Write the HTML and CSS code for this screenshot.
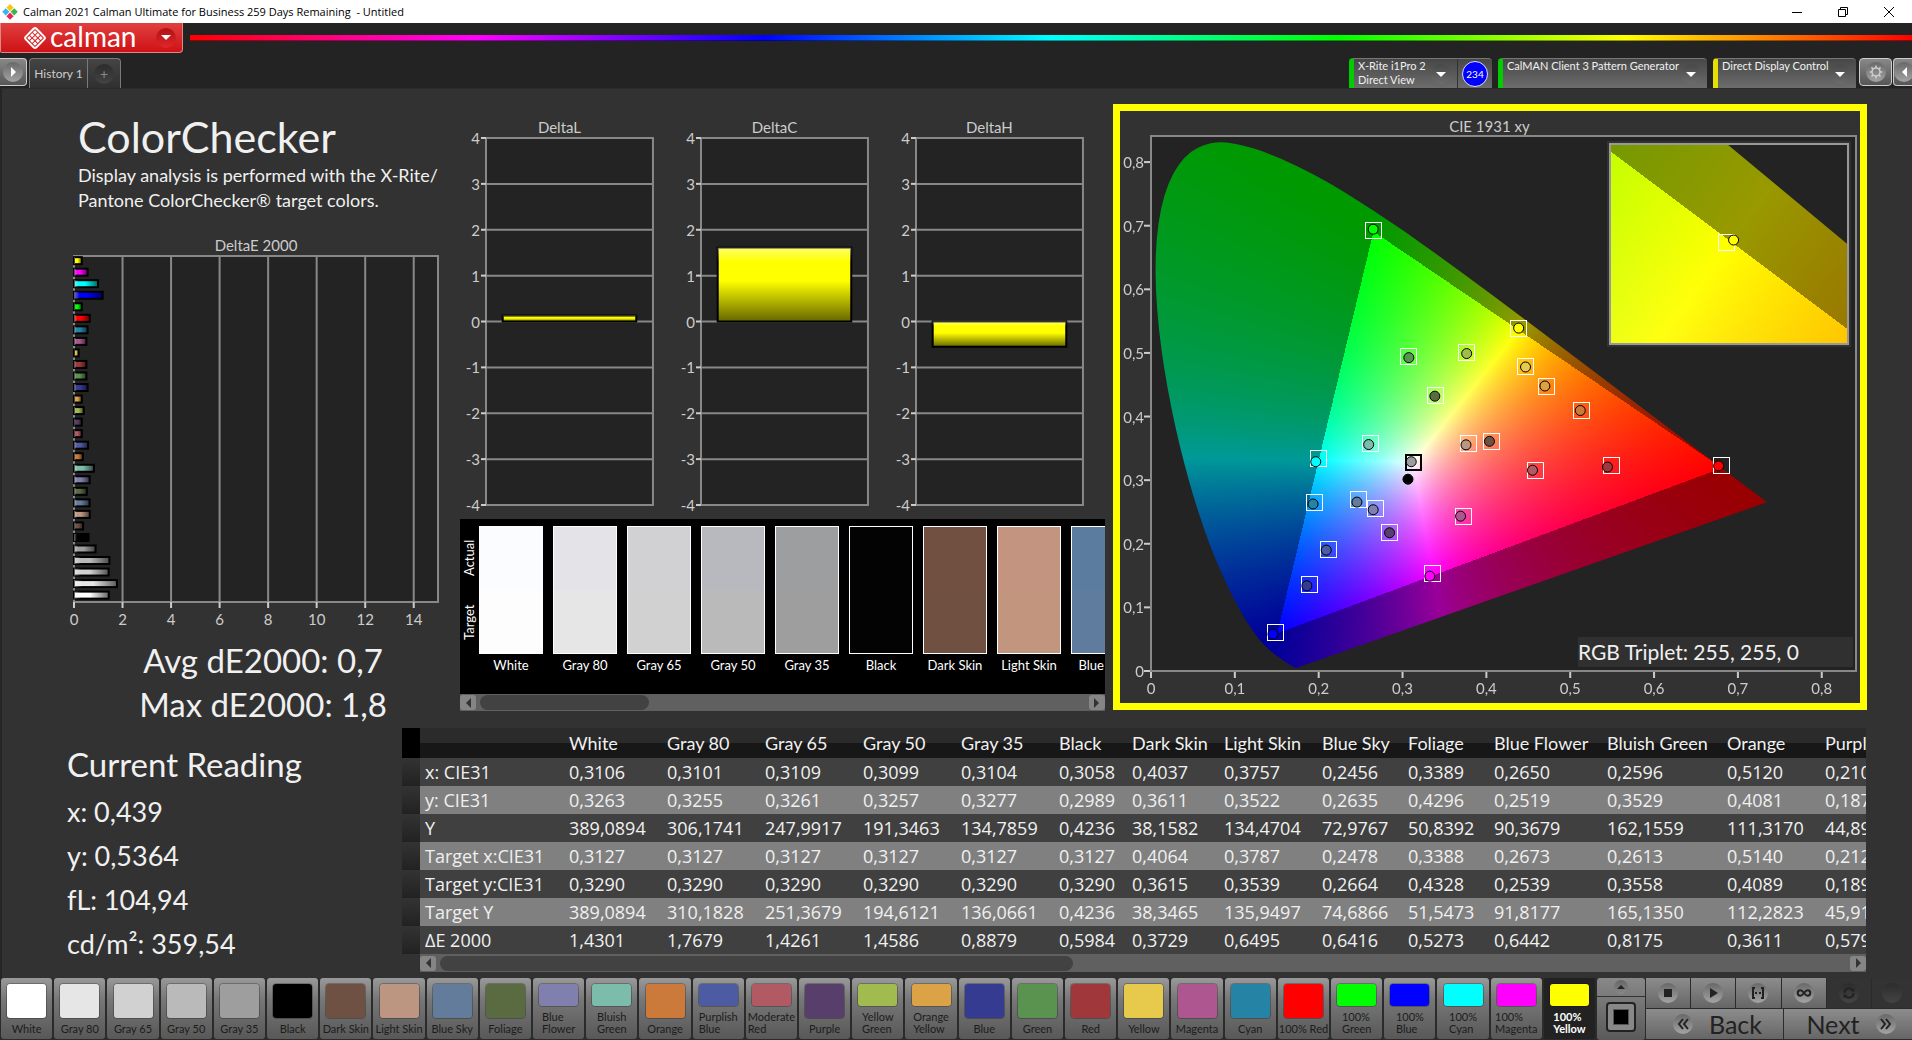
FILE: index.html
```html
<!doctype html>
<html lang="en">
  <head>
    <meta charset="UTF-8" />
    <meta name="viewport" content="width=device-width, initial-scale=1" />
    <title>Calman 2021</title>
    <link rel="stylesheet" href="styles.css">
  </head>
  <body>
    <header class="titlebar">
      <svg class="titlebar__icon" viewBox="0 0 16 16" aria-hidden="true">
        <path d="M8 0l3.600 3.600L8 7.200 4.400 3.600z" fill="#f7c514" />
        <path d="M3.800 4.200l3.600 3.600-3.600 3.600L.2 7.800z" fill="#35b6ee" />
        <path d="M12.200 4.200l3.600 3.600-3.600 3.600-3.600-3.600z" fill="#3fb649" />
        <path d="M8 8.600l3.600 3.600L8 15.800l-3.600-3.600z" fill="#e8245c" />
      </svg>
      <span class="titlebar__text">Calman 2021 Calman Ultimate for Business 259 Days Remaining &nbsp;- Untitled</span>
      <div class="titlebar__controls">
        <button aria-label="Minimize"><svg viewBox="0 0 12 12"><path d="M1 6.500h10" /></svg></button>
        <button aria-label="Restore"><svg viewBox="0 0 12 12"><path d="M1.500 3.500h7v7h-7zM3.500 3.500v-2h7v7h-2" /></svg></button>
        <button aria-label="Close"><svg viewBox="0 0 12 12"><path d="M1 1l10 10M11 1L1 11" /></svg></button>
      </div>
    </header>

    <div class="brandbar">
      <button class="brand">
        <svg class="brand__mark" viewBox="0 0 24 24" aria-hidden="true">
          <g transform="rotate(45 12 12)">
            <rect x="4.500" y="4.500" width="15" height="15" rx="2" fill="none" stroke="#fff" stroke-width="2" />
            <g fill="#fff">
              <rect x="6.500" y="6.500" width="3" height="3" />
              <rect x="10.500" y="6.500" width="3" height="3" />
              <rect x="14.500" y="6.500" width="3" height="3" />
              <rect x="6.500" y="10.500" width="3" height="3" />
              <rect x="10.500" y="10.500" width="3" height="3" />
              <rect x="14.500" y="10.500" width="3" height="3" />
              <rect x="6.500" y="14.500" width="3" height="3" />
              <rect x="10.500" y="14.500" width="3" height="3" />
              <rect x="14.500" y="14.500" width="3" height="3" />
            </g>
          </g>
        </svg>
        <span class="brand__name">calman</span>
        <span class="knob knob--red"><span class="caret"></span></span>
      </button>
      <div class="rainbow"></div>
    </div>

    <nav class="tabbar">
      <button class="square-button square-button--left" aria-label="Show panel">
        <span class="knob knob--light"><span class="caret caret--right"></span></span>
      </button>
      <div class="tabs">
        <button class="tabs__item">History 1</button>
        <button class="tabs__add" aria-label="Add tab"><span class="knob knob--dark">+</span></button>
      </div>
      <div class="devices">
        <div class="device device--meter">
          <button class="device__main">
            <span>X-Rite i1Pro 2<br>Direct View</span>
            <span class="knob"><span class="caret"></span></span>
          </button>
          <button class="device__count"><span>234</span></button>
        </div>
        <div class="device device--source">
          <button class="device__main">
            <span>CalMAN Client 3 Pattern Generator</span>
            <span class="knob"><span class="caret"></span></span>
          </button>
        </div>
        <div class="device device--display">
          <button class="device__main">
            <span>Direct Display Control</span>
            <span class="knob"><span class="caret"></span></span>
          </button>
        </div>
        <button class="square-button" aria-label="Settings">
          <span class="knob knob--light">
            <svg class="gear" viewBox="0 0 20 20">
              <circle cx="10" cy="10" r="5" />
              <path d="M10 2v3M10 15v3M2 10h3M15 10h3M4.300 4.300l2.200 2.200M13.500 13.500l2.200 2.200M15.700 4.300l-2.200 2.200M6.500 13.500l-2.200 2.200" />
            </svg>
          </span>
        </button>
        <button class="square-button square-button--right" aria-label="Hide panel">
          <span class="knob knob--light"><span class="caret caret--left"></span></span>
        </button>
      </div>
    </nav>

    <main>
      <div class="charts">
        <section class="summary">
          <h1>ColorChecker</h1>
          <p class="summary__text">Display analysis is performed with the X-Rite/<br>Pantone ColorChecker® target colors.</p>
          <h2 class="chart-title">DeltaE 2000</h2>
          <svg class="plot plot--delta-e" id="delta-e"></svg>
          <div class="summary__totals">
            <p>Avg dE2000: 0,7</p>
            <p>Max dE2000: 1,8</p>
          </div>
        </section>

        <section class="middle">
          <div class="deltas">
            <div class="delta">
              <h2 class="chart-title">DeltaL</h2>
              <svg class="plot plot--delta" data-value="0.13"></svg>
            </div>
            <div class="delta">
              <h2 class="chart-title">DeltaC</h2>
              <svg class="plot plot--delta" data-value="1.61"></svg>
            </div>
            <div class="delta">
              <h2 class="chart-title">DeltaH</h2>
              <svg class="plot plot--delta" data-value="-0.55"></svg>
            </div>
          </div>
          <div class="compare">
            <div class="compare__axis"><span>Target</span><span>Actual</span></div>
            <div class="compare__list" id="compare"></div>
          </div>
          <div class="scrollbar">
            <button class="scrollbar__arrow" aria-label="Scroll left"><span class="caret caret--left"></span></button>
            <div class="scrollbar__track"><div class="scrollbar__thumb scrollbar__thumb--swatches"></div></div>
            <button class="scrollbar__arrow" aria-label="Scroll right"><span class="caret caret--right"></span></button>
          </div>
        </section>

        <section class="cie">
          <h2 class="chart-title">CIE 1931 xy</h2>
          <div class="cie__plot">
            <canvas class="cie__fill" id="cie-fill"></canvas>
            <svg class="plot cie__marks" id="cie-marks"></svg>
            <div class="cie__inset">
              <canvas class="cie__fill" id="inset-fill"></canvas>
              <svg class="plot cie__marks" id="inset-marks"></svg>
            </div>
            <p class="cie__triplet">RGB Triplet: 255, 255, 0</p>
          </div>
        </section>
      </div>

      <div class="readings">
        <section class="current">
          <h2>Current Reading</h2>
          <p>x: 0,439</p>
          <p>y: 0,5364</p>
          <p>fL: 104,94</p>
          <p>cd/m²: 359,54</p>
        </section>
        <section class="data">
          <div class="data__view">
            <table>
              <colgroup>
                <col class="col-mark"><col class="col-label">
                <col class="col-m"><col class="col-m"><col class="col-m"><col class="col-m"><col class="col-m">
                <col class="col-xs"><col class="col-s2"><col class="col-m"><col class="col-s"><col class="col-s">
                <col class="col-l"><col class="col-xl"><col class="col-m"><col class="col-xl">
              </colgroup>
              <thead><tr id="data-head"></tr></thead>
              <tbody id="data-body"></tbody>
            </table>
          </div>
          <div class="scrollbar scrollbar--data">
            <button class="scrollbar__arrow" aria-label="Scroll left"><span class="caret caret--left"></span></button>
            <div class="scrollbar__track"><div class="scrollbar__thumb scrollbar__thumb--data"></div></div>
            <button class="scrollbar__arrow" aria-label="Scroll right"><span class="caret caret--right"></span></button>
          </div>
        </section>
      </div>
    </main>

    <footer>
      <div class="palette" id="palette"></div>
      <div class="pattern">
        <button class="pattern__up" aria-label="More patterns"><span class="knob knob--small"><span class="caret caret--up"></span></span></button>
        <button class="pattern__window" aria-label="Window pattern"><span></span></button>
      </div>
      <div class="transport">
        <div class="transport__row">
          <button aria-label="Stop"><span class="knob knob--light"><svg viewBox="0 0 16 16"><path d="M4 4h8v8H4z" /></svg></span></button>
          <button aria-label="Play"><span class="knob knob--light"><svg viewBox="0 0 16 16"><path d="M5 3l8 5-8 5z" /></svg></span></button>
          <button aria-label="Read series"><span class="knob knob--light"><svg viewBox="0 0 16 16"><path class="line" d="M5 3H3v10h2M11 3h2v10h-2M5 8h2M9 8h2" /></svg></span></button>
          <button aria-label="Read continuous"><span class="knob knob--light"><svg viewBox="0 0 16 16"><path class="line" d="M8 8C6.500 6 5.600 5.300 4.400 5.300a2.700 2.700 0 0 0 0 5.400C5.600 10.700 6.500 10 8 8s2.400-2.700 3.600-2.700a2.700 2.700 0 0 1 0 5.400C10.400 10.700 9.500 10 8 8z" /></svg></span></button>
          <button class="is-off" aria-label="Refresh"><span class="knob knob--dark"><svg viewBox="0 0 16 16"><path class="line" d="M3.500 8a4.500 4.500 0 0 1 8-3M12.500 8a4.500 4.500 0 0 1-8 3" /><path d="M9.500 6.500h4v-4zM6.500 9.500h-4v4z" /></svg></span></button>
          <button class="is-off" aria-label="Record"><span class="knob knob--dark"></span></button>
        </div>
        <div class="transport__row transport__row--nav">
          <button><span class="knob knob--light"><svg viewBox="0 0 16 16"><path class="line" d="M8 3L4 8l4 5M13 3L9 8l4 5" /></svg></span>Back</button>
          <button>Next<span class="knob knob--light"><svg viewBox="0 0 16 16"><path class="line" d="M3 3l4 5-4 5M8 3l4 5-4 5" /></svg></span></button>
        </div>
      </div>
    </footer>
    <script src="main.js"></script>
  </body>
</html>
```
FILE: styles.css
```css
* {
  box-sizing: border-box;
}

body {
  margin: 0;
  min-height: 100vh;
  display: flex;
  flex-direction: column;
  overflow-x: hidden;
  background-color: #232323;
  color: #f0f0f0;
  font-family: Lato, "Liberation Sans", sans-serif;
}

h1,
h2,
p {
  margin: 0;
  font-weight: 400;
}

button {
  padding: 0;
  border: 0;
  background: none;
  color: inherit;
  font-family: inherit;
}

/* window title */

.titlebar {
  display: flex;
  align-items: center;
  height: 23px;
  padding-left: 2px;
  background-color: #fff;
  color: #000;
  font: 11px "Open Sans", sans-serif;
}

.titlebar__icon {
  width: 16px;
  height: 16px;
  margin-right: 5px;
}

.titlebar__controls {
  display: flex;
  margin-left: auto;
}

.titlebar__controls button {
  display: grid;
  place-items: center;
  width: 46px;
}

.titlebar__controls svg {
  width: 12px;
  height: 12px;
  fill: none;
  stroke: #000;
}

/* round buttons and arrows */

.knob {
  flex: none;
  display: grid;
  place-items: center;
  width: 20px;
  height: 20px;
  border-radius: 50%;
  background: linear-gradient(#484848, #6c6c6c);
}

.knob--red {
  background: linear-gradient(#b01215, #e0262a);
}

.knob--light {
  background: linear-gradient(#686868, #a4a4a4);
}

.knob--dark {
  background: linear-gradient(#2c2c2c, #444);
}

.knob--small {
  width: 14px;
  height: 14px;
  background: linear-gradient(#666, #888);
}

.caret {
  border: 5px solid transparent;
  border-top-color: #fff;
  border-bottom: 0;
}

.caret--right {
  border: 5px solid transparent;
  border-left-color: #fff;
  border-right: 0;
}

.caret--left {
  border: 5px solid transparent;
  border-right-color: #fff;
  border-left: 0;
}

.caret--up {
  border: 4px solid transparent;
  border-bottom-color: #222;
  border-top: 0;
}

/* brand */

.brandbar {
  display: flex;
  align-items: flex-start;
  gap: 7px;
  height: 35px;
}

.brand {
  display: flex;
  align-items: center;
  width: 183px;
  height: 30px;
  padding: 0 6px 0 22px;
  border: 1px solid #d88;
  border-top: 0;
  border-radius: 0 0 4px 2px;
  background: linear-gradient(#e0403f, #cf1115);
  color: #fff;
}

.brand__mark {
  width: 24px;
  height: 24px;
  margin-right: 3px;
}

.brand__name {
  margin: 0 auto 4px 0;
  font-size: 28px;
  line-height: 24px;
}

.rainbow {
  flex: 1;
  height: 6px;
  margin-top: 12px;
  background: linear-gradient(to right, #f00, #f0f, #00f, #0ff, #0f0, #ff0, #f00);
  border-bottom: 1px solid rgb(0 0 0 / 0.4);
}

/* tabs and devices */

.tabbar {
  display: flex;
  height: 30px;
}

.square-button {
  display: grid;
  place-items: center;
  width: 33px;
  height: 28px;
  border: 1px solid #ccc;
  border-radius: 4px;
  background: linear-gradient(#888, #565656);
}

.square-button--left {
  width: 27px;
  border-left: 0;
  border-radius: 0 4px 4px 0;
}

.square-button--right {
  width: 19px;
  margin-left: 1px;
  border-right: 0;
  border-radius: 4px 0 0 4px;
}

.gear {
  width: 16px;
  height: 16px;
  fill: none;
  stroke: #ccc;
  stroke-width: 2;
}

.tabs {
  display: flex;
  margin-left: 2px;
  border: 1px solid #7a7a7a;
  border-bottom: 0;
  border-radius: 4px 4px 0 0;
  background: linear-gradient(#444, #303030);
}

.tabs__item {
  width: 58px;
  border-right: 1px solid #7a7a7a;
  color: #ccc;
  font-size: 12px;
}

.tabs__add {
  display: grid;
  place-items: center;
  width: 32px;
}

.tabs__add .knob {
  color: #888;
  font-size: 14px;
}

.devices {
  display: flex;
  margin-left: auto;
}

.device {
  display: flex;
  margin-right: 6px;
  border-left: 5px solid #0c0;
  border-top: 1px solid #777;
  border-radius: 4px 4px 0 0;
  background: linear-gradient(#474747, #6c6c6c);
}

.device--display {
  width: 143px;
  margin-right: 3px;
  border-left-color: #e6e000;
}

.device--meter {
  width: 143px;
}

.device--source {
  width: 209px;
}

.device__main {
  flex: 1;
  display: flex;
  align-items: flex-start;
  justify-content: space-between;
  padding: 0 6px 0 4px;
  font-size: 11px;
  line-height: 14px;
  text-align: left;
  white-space: nowrap;
}

.device__main .knob {
  margin-top: 5px;
}

.device__count {
  width: 35px;
  border-left: 1px solid #333;
}

.device__count span {
  display: grid;
  place-items: center;
  width: 26px;
  height: 26px;
  margin: 0 auto;
  border: 1px solid #ddf;
  border-radius: 50%;
  background-color: #00f;
  color: #fff;
  font-size: 10px;
}

/* workspace */

main {
  flex: 1;
  border-left: 2px solid #252525;
  border-top: 1px solid #2a2a2a;
  background-color: #323232;
}

.charts {
  display: grid;
  grid-template-columns: 458px 11fr 13fr;
  align-items: start;
  margin-right: 45px;
}

.chart-title {
  color: #ccc;
  font-size: 15px;
  line-height: 20px;
  text-align: center;
}

.plot {
  display: block;
  width: 100%;
  overflow: visible;
  font-size: 15px;
  fill: #ccc;
}

.plot .frame {
  fill: #232323;
  stroke: #888;
  stroke-width: 2;
}

.plot .grid {
  stroke: #888;
  stroke-width: 2;
}

.plot .tick {
  stroke: #ccc;
  stroke-width: 2;
}

.plot .bar {
  stroke: #000;
  stroke-width: 2;
}

.plot .middle-text {
  text-anchor: middle;
}

.plot .end-text {
  text-anchor: end;
}

.summary {
  padding: 22px 22px 0 72px;
}

.summary h1 {
  padding-left: 4px;
  font-size: 43px;
  line-height: 52px;
}

.summary__text {
  padding-left: 4px;
  font-size: 18px;
  line-height: 25px;
  white-space: nowrap;
}

.summary .chart-title {
  margin: 22px 0 1px;
}

.plot--delta-e {
  height: 346px;
}

.summary__totals {
  margin-top: 36px;
  padding-left: 14px;
  font-size: 33px;
  line-height: 44px;
  text-align: center;
}

.middle {
  padding-top: 28px;
  min-width: 0;
}

.deltas {
  display: grid;
  grid-template-columns: repeat(3, 1fr);
}

.delta {
  padding: 0 22px 0 26px;
}

.delta .chart-title {
  margin: 0 10px 1px -10px;
}

.plot--delta {
  height: 367px;
}

.compare {
  display: flex;
  height: 175px;
  margin-top: 14px;
  padding-top: 7px;
  overflow: hidden;
  background-color: #000;
  color: #fff;
  font-size: 13px;
}

.compare__axis {
  flex: none;
  display: flex;
  justify-content: space-around;
  width: 19px;
  height: 128px;
  line-height: 18px;
  writing-mode: vertical-rl;
  transform: rotate(180deg);
}

.compare__list {
  display: flex;
  gap: 10px;
}

.compare__item {
  flex: none;
  width: 64px;
  line-height: 22px;
  text-align: center;
  white-space: nowrap;
}

.compare__item svg {
  display: block;
  width: 64px;
  height: 128px;
  border: 1px solid #fff;
}

.scrollbar {
  display: flex;
  align-items: center;
  height: 17px;
  background-color: #606060;
}

.scrollbar--data {
  height: 18px;
  margin-left: 18px;
}

.scrollbar__arrow {
  display: grid;
  place-items: center;
  width: 16px;
  height: 15px;
  border-radius: 3px;
  background-color: #858585;
}

.scrollbar__arrow .caret--left {
  border-right-color: #333;
}

.scrollbar__arrow .caret--right {
  border-left-color: #333;
}

.scrollbar__track {
  flex: 1;
  padding: 0 4px;
}

.scrollbar__thumb {
  height: 15px;
  border-radius: 8px;
  background-color: #424242;
}

.scrollbar__thumb--swatches {
  width: 28%;
}

.scrollbar__thumb--data {
  width: 45%;
}

.cie {
  margin: 15px 0 0 8px;
  padding: 5px 4px 32px 31px;
  border: 7px solid #ff0;
}

.cie .chart-title {
  padding-right: 28px;
}

.cie__plot {
  position: relative;
  height: 535px;
  outline: 2px solid #888;
  outline-offset: -1px;
  background-color: #232323;
}

.cie__fill {
  display: block;
  width: 100%;
  height: 100%;
}

.cie__marks {
  position: absolute;
  inset: 0;
  height: 100%;
}

.cie__marks .target {
  fill: none;
  stroke: #fff;
  stroke-width: 1;
  shape-rendering: crispEdges;
}

.cie__marks .target--white-point {
  stroke: #000;
  stroke-width: 2;
}

.cie__marks .actual {
  stroke: #000;
  stroke-width: 1;
}

.cie__inset {
  position: absolute;
  top: 7px;
  right: 7px;
  width: 34%;
  height: 202px;
  border: 2px solid #999;
  outline: 2px solid #323232;
}

.cie__triplet {
  position: absolute;
  right: 3px;
  bottom: 4px;
  width: 275px;
  background-color: #303030;
  font-size: 21px;
  line-height: 30px;
  white-space: nowrap;
}

/* readings */

.readings {
  display: flex;
  align-items: flex-start;
  margin-right: 46px;
  padding-bottom: 5px;
}

.current {
  width: 400px;
  padding: 16px 0 0 65px;
  font-size: 27px;
  line-height: 44px;
}

.current h2 {
  margin-bottom: 4px;
  font-size: 33px;
}

.data {
  flex: 1;
  min-width: 0;
  margin-top: 2px;
}

.data__view {
  overflow: hidden;
}

table {
  width: 1538px;
  table-layout: fixed;
  border-collapse: collapse;
  font-size: 18px;
  white-space: nowrap;
}

.col-mark { width: 18px; }
.col-label { width: 144px; }
.col-xs { width: 73px; }
.col-s { width: 86px; }
.col-s2 { width: 92px; }
.col-m { width: 98px; }
.col-l { width: 113px; }
.col-xl { width: 120px; }

th,
td {
  height: 28px;
  padding: 0 0 0 5px;
  font-family: "Open Sans", sans-serif;
  font-weight: 400;
  line-height: 20px;
  text-align: left;
}

thead th {
  height: 30px;
  background: linear-gradient(#2b2b2b 50%, #171717 50%);
  font-family: Lato, sans-serif;
  font-size: 18px;
}

thead th:first-child {
  background: #000;
}

tbody tr {
  background-color: #404040;
}

tbody tr:nth-child(even) {
  background-color: #808080;
}

tbody td:first-child {
  background: linear-gradient(#333, #222);
}

/* bottom bar */

footer {
  display: flex;
  height: 62px;
  background-color: #2b2b2b;
}

.palette {
  flex: 1;
  display: flex;
  gap: 2px;
  min-width: 0;
  padding: 0 2px 1px 1px;
}

.palette__item {
  flex: 1 1 0;
  display: flex;
  flex-direction: column;
  align-items: center;
  justify-content: space-between;
  min-width: 0;
  padding: 5px 0 4px;
  border-radius: 3px;
  background: linear-gradient(#999, #777 35%, #585858);
  color: #1c1c1c;
  font-size: 11px;
  line-height: 12px;
  text-align: left;
  white-space: nowrap;
}

.palette__item svg {
  flex: 1;
  width: 41px;
  min-height: 0;
  margin-bottom: 4px;
  border: 1px solid rgb(0 0 0 / 0.25);
  border-radius: 4px;
}

.palette__item.is-selected {
  background: #222;
  color: #fff;
  font-weight: 700;
}

.pattern {
  display: flex;
  flex-direction: column;
  width: 48px;
  margin-right: 1px;
  border-radius: 3px;
  background: linear-gradient(#888, #5a5a5a);
}

.pattern__up {
  display: grid;
  place-items: center;
  height: 19px;
  border-bottom: 1px solid #333;
}

.pattern__window {
  display: grid;
  place-items: center;
  width: 30px;
  height: 30px;
  margin: 5px auto;
  border: 2px solid #222;
  border-radius: 4px;
  background-color: #888;
}

.pattern__window span {
  width: 14px;
  height: 14px;
  background-color: #000;
  outline: 1px solid #555;
}

.transport {
  width: 266px;
}

.transport__row {
  display: grid;
  grid-template-columns: repeat(5, 1fr) 40px;
  gap: 1px;
  height: 30px;
  margin-bottom: 1px;
}

.transport__row--nav {
  grid-template-columns: 137px 1fr;
}

.transport button {
  display: flex;
  align-items: center;
  justify-content: center;
  background: linear-gradient(#8c8c8c, #666);
  color: #222;
}

.transport .is-off {
  background: #333;
}

.transport svg {
  width: 16px;
  height: 16px;
  fill: #222;
}

.transport .line {
  fill: none;
  stroke: #222;
  stroke-width: 2;
}

.transport__row--nav button {
  gap: 16px;
  padding: 0 10px 0 16px;
  font-size: 25px;
  line-height: 28px;
}
```
FILE: main.js
```js
const patches = [
  // name, button colour, dE2000
  ["White", "#ffffff", 1.4301],
  ["Gray 80", "#e6e6e6", 1.7679],
  ["Gray 65", "#d1d1d1", 1.4261],
  ["Gray 50", "#bababa", 1.4586],
  ["Gray 35", "#9e9e9e", 0.8879],
  ["Black", "#000000", 0.5984],
  ["Dark Skin", "#6f5143", 0.3729],
  ["Light Skin", "#bd9682", 0.6495],
  ["Blue Sky", "#647c9b", 0.6416],
  ["Foliage", "#5a6b42", 0.5273],
  ["Blue Flower", "#817fad", 0.6442],
  ["Bluish Green", "#7cbcab", 0.8175],
  ["Orange", "#cc7a3b", 0.3611],
  ["Purplish Blue", "#4c5ba2", 0.5792],
  ["Moderate Red", "#b25a63", 0.32],
  ["Purple", "#583f6b", 0.32],
  ["Yellow Green", "#a2bb4e", 0.4],
  ["Orange Yellow", "#dca246", 0.32],
  ["Blue", "#353b91", 0.56],
  ["Green", "#5a924f", 0.51],
  ["Red", "#a0373b", 0.51],
  ["Yellow", "#e7ca4b", 0.19],
  ["Magenta", "#ae568f", 0.51],
  ["Cyan", "#2583a5", 0.56],
  ["100% Red", "#ff0000", 0.65],
  ["100% Green", "#00ff00", 0.32],
  ["100% Blue", "#0000ff", 1.18],
  ["100% Cyan", "#00ffff", 0.99],
  ["100% Magenta", "#ff00ff", 0.56],
  ["100% Yellow", "#ffff00", 0.32],
];

// name, actual, target
const comparison = [
  ["White", "#fbfcff", "#fdfdfd"],
  ["Gray 80", "#e3e3e8", "#e6e6e6"],
  ["Gray 65", "#d1d1d3", "#d1d1d1"],
  ["Gray 50", "#b7b9be", "#bababa"],
  ["Gray 35", "#9d9ea0", "#9e9e9e"],
  ["Black", "#030303", "#030303"],
  ["Dark Skin", "#715041", "#705040"],
  ["Light Skin", "#c39581", "#c2957f"],
  ["Blue Sky", "#5b7c9f", "#5f7c9e"],
];

const rows = [
  ["x: CIE31", "0,3106", "0,3101", "0,3109", "0,3099", "0,3104", "0,3058", "0,4037", "0,3757", "0,2456", "0,3389", "0,2650", "0,2596", "0,5120", "0,2101"],
  ["y: CIE31", "0,3263", "0,3255", "0,3261", "0,3257", "0,3277", "0,2989", "0,3611", "0,3522", "0,2635", "0,4296", "0,2519", "0,3529", "0,4081", "0,1873"],
  ["Y", "389,0894", "306,1741", "247,9917", "191,3463", "134,7859", "0,4236", "38,1582", "134,4704", "72,9767", "50,8392", "90,3679", "162,1559", "111,3170", "44,8953"],
  ["Target x:CIE31", "0,3127", "0,3127", "0,3127", "0,3127", "0,3127", "0,3127", "0,4064", "0,3787", "0,2478", "0,3388", "0,2673", "0,2613", "0,5140", "0,2125"],
  ["Target y:CIE31", "0,3290", "0,3290", "0,3290", "0,3290", "0,3290", "0,3290", "0,3615", "0,3539", "0,2664", "0,4328", "0,2539", "0,3558", "0,4089", "0,1893"],
  ["Target Y", "389,0894", "310,1828", "251,3679", "194,6121", "136,0661", "0,4236", "38,3465", "135,9497", "74,6866", "51,5473", "91,8177", "165,1350", "112,2823", "45,9123"],
  ["ΔE 2000", "1,4301", "1,7679", "1,4261", "1,4586", "0,8879", "0,5984", "0,3729", "0,6495", "0,6416", "0,5273", "0,6442", "0,8175", "0,3611", "0,5792"],
];

// target x, y, actual x, y, colour
const points = [
  [0.4064, 0.3615, 0.4037, 0.3611, "#6f5143"],
  [0.3787, 0.3572, 0.3757, 0.3555, "#bd9682"],
  [0.2478, 0.2690, 0.2456, 0.2655, "#647c9b"],
  [0.3388, 0.4335, 0.3385, 0.4320, "#5a6b42"],
  [0.2673, 0.2549, 0.2650, 0.2535, "#817fad"],
  [0.2613, 0.3580, 0.2596, 0.3560, "#7cbcab"],
  [0.5140, 0.4099, 0.5120, 0.4095, "#cc7a3b"],
  [0.2120, 0.1910, 0.2090, 0.1900, "#4c5ba2"],
  [0.4587, 0.3156, 0.4550, 0.3156, "#b25a63"],
  [0.2845, 0.2173, 0.2845, 0.2173, "#583f6b"],
  [0.3765, 0.5008, 0.3765, 0.4990, "#a2bb4e"],
  [0.4714, 0.4480, 0.4698, 0.4480, "#dca246"],
  [0.1889, 0.1359, 0.1859, 0.1340, "#353b91"],
  [0.3075, 0.4946, 0.3075, 0.4926, "#5a924f"],
  [0.5489, 0.3224, 0.5445, 0.3206, "#a0373b"],
  [0.4467, 0.4779, 0.4467, 0.4779, "#e7ca4b"],
  [0.3725, 0.2434, 0.3692, 0.2434, "#ae568f"],
  [0.1949, 0.2646, 0.1933, 0.2625, "#2583a5"],
  [0.6800, 0.3224, 0.6770, 0.3224, "#f00"],
  [0.2650, 0.6930, 0.2650, 0.6945, "#0f0"],
  [0.1480, 0.0613, 0.1455, 0.0580, "#00f"],
  [0.1997, 0.3336, 0.1965, 0.3290, "#0ff"],
  [0.3355, 0.1526, 0.3325, 0.1490, "#f0f"],
  [0.4385, 0.5390, 0.4385, 0.5390, "#ff0"],
];

const locus = [
  [0.1741, 0.005], [0.1714, 0.0051], [0.1689, 0.0069], [0.1644, 0.0109], [0.1566, 0.0177],
  [0.144, 0.0297], [0.1355, 0.0399], [0.1241, 0.0578], [0.1096, 0.0868], [0.0913, 0.1327],
  [0.0687, 0.2007], [0.0454, 0.295], [0.0235, 0.4127], [0.0082, 0.5384], [0.0039, 0.6548],
  [0.0139, 0.7502], [0.0389, 0.812], [0.0743, 0.8338], [0.1142, 0.8262], [0.1547, 0.8059],
  [0.1929, 0.7816], [0.2296, 0.7543], [0.3016, 0.6923], [0.3731, 0.6245], [0.4441, 0.5547],
  [0.5125, 0.4866], [0.5752, 0.4242], [0.627, 0.3725], [0.6658, 0.334], [0.6915, 0.3083],
  [0.719, 0.2809], [0.7347, 0.2653],
];

const byId = (id) => document.getElementById(id);

function rect(x, y, w, h, cls, fill) {
  return `<rect class="${cls}" x="${x}" y="${y}" width="${w}" height="${h}"${fill ? ` fill="${fill}"` : ""} />`;
}

function line(x1, y1, x2, y2, cls) {
  return `<line class="${cls}" x1="${x1}" y1="${y1}" x2="${x2}" y2="${y2}" />`;
}

function label(x, y, text, cls) {
  return `<text class="${cls}" x="${x}" y="${y}">${text}</text>`;
}

// nested svg, so that its content is in pixels from a point given in percent
function at(x, y, content) {
  return `<svg class="plot" x="${x}" y="${y}">${content}</svg>`;
}

function shade(id, x2, y2) {
  return `<defs><linearGradient id="${id}" x2="${x2}" y2="${y2}">
    <stop offset="0" stop-color="#fff" stop-opacity="0.4" />
    <stop offset="0.2" stop-color="#fff" stop-opacity="0" />
    <stop offset="0.45" stop-color="#000" stop-opacity="0" />
    <stop offset="1" stop-color="#000" stop-opacity="0.6" />
  </linearGradient></defs>`;
}

function drawDeltaE() {
  const max = 15;
  let out = shade("shade-x", 1, 0) + rect(0, 0, "100%", "100%", "frame");
  for (let v = 0; v <= 14; v += 2) {
    const x = `${(v / max) * 100}%`;
    if (v) out += line(x, 0, x, "100%", "grid");
    out += at(x, "100%", line(0, 0, 0, 6, "tick") + label(0, 23, v, "middle-text"));
  }
  [...patches].reverse().forEach(([, colour, dE], i) => {
    const y = `${((i + 0.1) / patches.length) * 100}%`;
    const w = `${(dE / max) * 100}%`;
    out += rect(0, y, w, 7, "bar", colour) + rect(0, y, w, 7, "", "url(#shade-x)");
  });
  byId("delta-e").innerHTML = out;
}

function drawDelta(svg, i) {
  const value = Number(svg.dataset.value);
  let out = shade(`shade-y${i}`, 0, 1) + rect(0, 0, "100%", "100%", "frame");
  for (let v = 4; v >= -4; v--) {
    const y = `${((4 - v) / 8) * 100}%`;
    if (Math.abs(v) < 4) out += line(0, y, "100%", y, "grid");
    out += at(0, y, line(0, 0, -5, 0, "tick") + label(-6, 6, v, "end-text"));
  }
  const top = `${((4 - Math.max(value, 0)) / 8) * 100}%`;
  const h = `${(Math.abs(value) / 8) * 100}%`;
  out += rect("10%", top, "80%", h, "bar", "#ff0") + rect("10%", top, "80%", h, "", `url(#shade-y${i})`);
  svg.innerHTML = out;
}

// P3 primaries, linear light, brightest channel scaled to full
function xyToRgb(x, y) {
  const X = x / y;
  const Z = (1 - x - y) / y;
  const rgb = [
    2.4935 * X - 0.9314 - 0.4027 * Z,
    -0.8295 * X + 1.7627 + 0.0236 * Z,
    0.0358 * X - 0.0762 + 0.9569 * Z,
  ];
  const level = Math.min(...rgb) < -0.002 ? 153 : 255;
  const peak = Math.max(...rgb);
  return rgb.map((c) => (Math.max(c, 0) / peak) * level);
}

function drawGamut(canvas, x0, y0, range) {
  const w = (canvas.width = canvas.clientWidth);
  const h = (canvas.height = canvas.clientHeight);
  const ctx = canvas.getContext("2d");
  const image = ctx.createImageData(w, h);
  for (let j = 0; j < h; j++) {
    for (let i = 0; i < w; i++) {
      const rgb = xyToRgb(x0 + (i / w) * range, y0 + ((h - j) / h) * range);
      image.data.set([...rgb, 255], (j * w + i) * 4);
    }
  }
  ctx.putImageData(image, 0, 0);

  // keep only what is inside the spectral locus
  const px = locus.map(([x, y]) => [((x - x0) / range) * w, h - ((y - y0) / range) * h]);
  ctx.globalCompositeOperation = "destination-in";
  ctx.beginPath();
  ctx.moveTo(...px[0]);
  for (let k = 1; k < px.length - 1; k++) {
    const [ax, ay] = px[k];
    const [bx, by] = px[k + 1];
    ctx.quadraticCurveTo(ax, ay, (ax + bx) / 2, (ay + by) / 2);
  }
  ctx.lineTo(...px[px.length - 1]);
  ctx.closePath();
  ctx.fill();
}

function marker(tx, ty, ax, ay, colour) {
  return at(`${tx}%`, `${ty}%`, rect(-8, -8, 16, 16, "target")) +
    `<circle class="actual" cx="${ax}%" cy="${ay}%" r="5" fill="${colour}" />`;
}

function drawCie() {
  const range = 0.841;
  const px = (x) => (x / range) * 100;
  const py = (y) => 100 - (y / range) * 100;
  let out = "";
  for (let i = 0; i <= 8; i++) {
    const text = i ? `0,${i}` : "0";
    out += at(`${px(i / 10)}%`, "100%", line(0, 1, 0, 7, "tick") + label(0, 23, text, "middle-text"));
    out += at(0, `${py(i / 10)}%`, line(-7, 0, -1, 0, "tick") + label(-7, 6, text, "end-text"));
  }
  for (const [tx, ty, ax, ay, colour] of points) {
    out += marker(px(tx), py(ty), px(ax), py(ay), colour);
  }
  out += at(`${px(0.3127)}%`, `${py(0.329)}%`, rect(-7, -7, 15, 15, "target target--white-point"));
  out += `<circle class="actual" cx="${px(0.3104)}%" cy="${py(0.329)}%" r="5" fill="#9e9e9e" />`;
  out += `<circle class="actual" cx="${px(0.3065)}%" cy="${py(0.3015)}%" r="5" fill="#000" />`;
  byId("cie-marks").innerHTML = out;
  byId("inset-marks").innerHTML = marker(49, 49, 52, 48, "#ff0");
  drawGamut(byId("cie-fill"), 0, 0, range);
  drawGamut(byId("inset-fill"), 0.413, 0.5108, 0.05);
}

function fillLists() {
  byId("compare").innerHTML = comparison
    .map(([name, actual, target]) => `<div class="compare__item"><svg>${rect(0, 0, "100%", "100%", "", target)}${rect(0, 0, "100%", "50%", "", actual)}</svg>${name}</div>`)
    .join("");

  byId("palette").innerHTML = patches
    .map(([name, colour], i) => {
      const wraps = !/Skin|Sky|Gray|100% Red/.test(name);
      const text = wraps ? name.replace(" ", "<br>") : name;
      const selected = i === patches.length - 1 ? " is-selected" : "";
      return `<button class="palette__item${selected}"><svg>${rect(0, 0, "100%", "100%", "", colour)}</svg><span>${text}</span></button>`;
    })
    .join("");

  const names = patches.slice(0, 14).map(([name]) => `<th scope="col">${name}</th>`);
  byId("data-head").innerHTML = `<th></th><th></th>${names.join("")}`;
  byId("data-body").innerHTML = rows
    .map(([name, ...cells]) => `<tr><td></td><th scope="row">${name}</th>${cells.map((c) => `<td>${c}</td>`).join("")}</tr>`)
    .join("");
}

fillLists();
drawDeltaE();
document.querySelectorAll(".plot--delta").forEach(drawDelta);
drawCie();
window.addEventListener("resize", drawCie);
```
